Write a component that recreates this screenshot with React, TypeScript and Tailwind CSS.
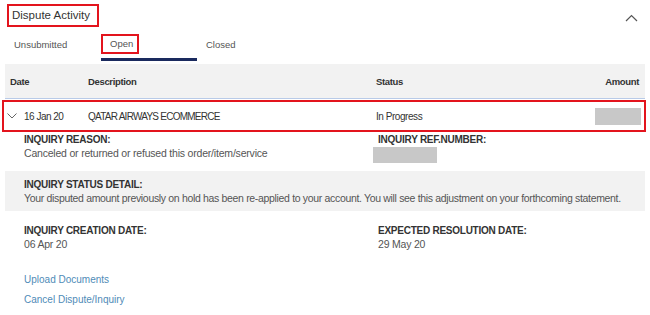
function ChevronUp() {
  return (
    <svg width="13" height="8" viewBox="0 0 13 8" fill="none">
      <polyline points="1,7 6.5,1.5 12,7" stroke="#555" strokeWidth="1.2" />
    </svg>
  );
}

function ChevronDown() {
  return (
    <svg width="10" height="6" viewBox="0 0 10 6" fill="none">
      <polyline points="0.5,0.5 5,5 9.5,0.5" stroke="#666" strokeWidth="1" />
    </svg>
  );
}

function Field({
  label,
  children,
  valueClass = "tracking-[-0.2px]",
}: {
  label: string;
  children: React.ReactNode;
  valueClass?: string;
}) {
  return (
    <div className="flex flex-col">
      <span className="text-[10px] leading-[13px] font-semibold text-[#333] tracking-[-0.25px]">{label}</span>
      <span className={"text-[10.5px] leading-[14px] text-[#555] " + valueClass}>{children}</span>
    </div>
  );
}

function App() {
  return (
    <div
      className="w-[650px] h-[315px] bg-white overflow-hidden"
      style={{ fontFamily: '"Liberation Sans", Arial, sans-serif' }}
    >
      {/* Title */}
      <div className="flex items-start justify-between pt-[4px] pl-[7px] pr-[12px]">
        <div className="border-2 border-[#e3141d] w-[92px] h-[23px] flex items-center pl-[3px]">
          <span className="text-[11.5px] font-medium text-[#333]">Dispute Activity</span>
        </div>
        <div className="mt-[10px]">
          <ChevronUp />
        </div>
      </div>

      {/* Tabs */}
      <div className="flex items-start mt-[7px] h-[26px] text-[9.5px] text-[#555]">
        <div className="w-[101px] pl-[14px] pt-[4px]">Unsubmitted</div>
        <div className="w-[96px] flex flex-col">
          <div className="border-2 border-[#e3141d] w-[38px] h-[20px] flex items-center pl-[7px]">Open</div>
          <div className="mt-[4px] h-[3px] bg-[#1a2a5e]" />
        </div>
        <div className="pl-[9px] pt-[4px]">Closed</div>
      </div>

      {/* Table header */}
      <div className="ml-[5px] mt-[4px] w-[640px] h-[35px] bg-[#f2f2f2] border-b border-[#b9cbe8] flex items-center pt-[2px] pl-[5px] pr-[6px] text-[9.5px] font-semibold text-[#333] tracking-[-0.35px]">
        <div className="w-[78px]">Date</div>
        <div className="w-[288px]">Description</div>
        <div className="flex-1">Status</div>
        <div>Amount</div>
      </div>

      {/* Row */}
      <div className="ml-[2px] mt-[1px] w-[644px] h-[32px] border-2 border-[#e3141d] flex items-center pl-[3px] pr-[3px] text-[10px] text-[#333]">
        <div className="w-[17px] flex items-center">
          <ChevronDown />
        </div>
        <div className="w-[64px] tracking-[-0.5px]">16 Jan 20</div>
        <div className="w-[288px] tracking-[-0.75px]">QATAR AIRWAYS ECOMMERCE</div>
        <div className="flex-1 tracking-[-0.45px]">In Progress</div>
        <div className="w-[46px] h-[17px] bg-[#c8c8c8]" />
      </div>

      {/* Reason / ref */}
      <div className="flex pl-[24px] mt-[1px] h-[34px]">
        <div className="w-[349px]">
          <Field label="INQUIRY REASON:">Canceled or returned or refused this order/item/service</Field>
        </div>
        <div className="flex flex-col">
          <span className="pl-[5px] text-[10px] leading-[13px] font-semibold text-[#333] tracking-[-0.25px]">
            INQUIRY REF.NUMBER:
          </span>
          <div className="mt-[1px] w-[64px] h-[16px] bg-[#c8c8c8]" />
        </div>
      </div>

      {/* Status detail */}
      <div className="ml-[5px] mt-[4px] w-[640px] h-[40px] bg-[#f2f2f2] flex items-center pl-[19px]">
        <Field label="INQUIRY STATUS DETAIL:" valueClass="tracking-[-0.33px]">
          Your disputed amount previously on hold has been re-applied to your account. You will see this adjustment on your
          forthcoming statement.
        </Field>
      </div>

      {/* Dates */}
      <div className="flex pl-[24px] mt-[13px]">
        <div className="w-[354px]">
          <Field label="INQUIRY CREATION DATE:">06 Apr 20</Field>
        </div>
        <Field label="EXPECTED RESOLUTION DATE:">29 May 20</Field>
      </div>

      {/* Links */}
      <div className="flex flex-col gap-[6px] pl-[24px] mt-[22px] text-[10px] leading-[14px] text-[#4f8bb7]">
        <a>Upload Documents</a>
        <a>Cancel Dispute/Inquiry</a>
      </div>
    </div>
  );
}

export default App;
